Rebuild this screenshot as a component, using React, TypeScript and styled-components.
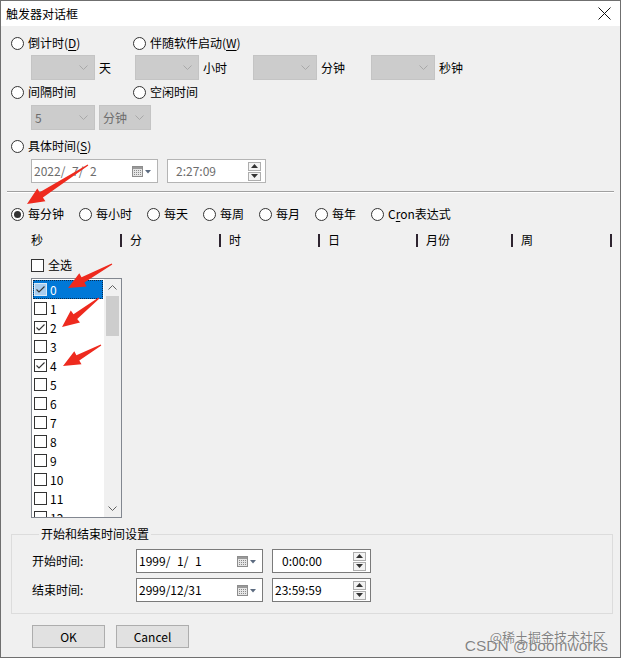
import React from "react";
import styled, { createGlobalStyle } from "styled-components";

const GlobalStyle = createGlobalStyle`
  body {
    margin: 0;
    background: #ffffff;
    font-family: "Noto Sans CJK SC", "Liberation Sans", sans-serif;
    font-size: 12px;
    line-height: 16px;
    color: #000;
  }
`;

const Window = styled.div`
  position: relative;
  width: 621px;
  height: 658px;
  box-sizing: border-box;
  border: 1px solid #6f6f6f;
  background: #f0f0f0;
  display: flex;
  flex-direction: column;
  overflow: hidden;
`;

const TitleBar = styled.div`
  height: 25px;
  background: #ffffff;
  display: flex;
  align-items: center;
  justify-content: space-between;
  padding: 0 9px 0 5px;
  flex-shrink: 0;
`;

const Body = styled.div`
  padding: 7px 10px 0 10px;
  display: flex;
  flex-direction: column;
`;

const Row = styled.div<{ $h: number; $mt?: number; $pl?: number; $gap?: number }>`
  display: flex;
  align-items: center;
  height: ${(p) => p.$h}px;
  margin-top: ${(p) => p.$mt ?? 0}px;
  padding-left: ${(p) => p.$pl ?? 0}px;
  gap: ${(p) => p.$gap ?? 0}px;
  flex-shrink: 0;
`;

const Cell = styled.div<{ $w?: number; $ml?: number }>`
  display: flex;
  align-items: center;
  width: ${(p) => (p.$w ? `${p.$w}px` : "auto")};
  margin-left: ${(p) => p.$ml ?? 0}px;
  flex-shrink: 0;
`;

const RadioWrap = styled.label<{ $w?: number; $mr?: number }>`
  display: flex;
  align-items: center;
  gap: 4px;
  width: ${(p) => (p.$w ? `${p.$w}px` : "auto")};
  margin-right: ${(p) => p.$mr ?? 0}px;
  flex-shrink: 0;
  white-space: nowrap;
`;

const RadioCircle = styled.span<{ $checked?: boolean }>`
  width: 13px;
  height: 13px;
  box-sizing: border-box;
  border: 1px solid #333;
  border-radius: 50%;
  background: #fff;
  display: flex;
  align-items: center;
  justify-content: center;
  &::after {
    content: "";
    width: 7px;
    height: 7px;
    border-radius: 50%;
    background: ${(p) => (p.$checked ? "#333" : "transparent")};
  }
`;

const U = styled.span`
  text-decoration: underline;
  text-underline-offset: 2px;
`;

const Combo = styled.div<{ $w: number }>`
  width: ${(p) => p.$w}px;
  height: 25px;
  box-sizing: border-box;
  background: #cccccc;
  border: 1px solid #c4c4c4;
  display: flex;
  align-items: center;
  justify-content: space-between;
  padding: 0 6px 0 3px;
  color: #6d6d6d;
`;

const SideLabel = styled.span`
  margin-left: 4px;
  white-space: nowrap;
`;

const Field = styled.div<{ $w: number; $disabled?: boolean; $pl?: number }>`
  width: ${(p) => p.$w}px;
  height: 24px;
  box-sizing: border-box;
  background: #fff;
  border: 1px solid ${(p) => (p.$disabled ? "#b4b4b4" : "#7a7a7a")};
  color: ${(p) => (p.$disabled ? "#6d6d6d" : "#000")};
  display: flex;
  align-items: center;
  padding-left: ${(p) => p.$pl ?? 2}px;
  white-space: pre;
  flex-shrink: 0;
`;

const FieldTail = styled.div<{ $mr?: number }>`
  margin-left: auto;
  margin-right: ${(p) => p.$mr ?? 0}px;
  display: flex;
  align-items: center;
`;

const SpinStack = styled.div`
  display: flex;
  flex-direction: column;
  gap: 1px;
  margin-right: 4px;
`;

const SpinBtn = styled.div`
  width: 13px;
  height: 9px;
  box-sizing: border-box;
  border: 1px solid #adadad;
  background: #f3f3f3;
  display: flex;
  align-items: center;
  justify-content: center;
`;

const Separator = styled.div`
  margin: 8px -4px 0 -4px;
  border-top: 1px solid #a0a0a0;
  border-bottom: 1px solid #ffffff;
  flex-shrink: 0;
`;

const HeaderCell = styled.div<{ $w: number }>`
  display: flex;
  align-items: center;
  flex-shrink: 0;
  & > span:first-child {
    width: ${(p) => p.$w}px;
  }
`;

const Pipe = styled.span`
  width: 2px;
  height: 13px;
  background: #2e2430;
  margin-right: 8px;
`;

const CheckWrap = styled.div`
  display: flex;
  align-items: center;
  gap: 4px;
`;

const Box = styled.span<{ $tone?: "normal" | "selected" }>`
  width: 13px;
  height: 13px;
  box-sizing: border-box;
  border: 1px solid ${(p) => (p.$tone === "selected" ? "#d8e8f6" : "#333")};
  background: ${(p) => (p.$tone === "selected" ? "#a9cdee" : "#fff")};
  display: flex;
  align-items: center;
  justify-content: center;
  flex-shrink: 0;
`;

const ListBox = styled.div`
  margin-top: 3px;
  margin-left: 20px;
  width: 91px;
  height: 240px;
  box-sizing: border-box;
  border: 1px solid #828790;
  background: #fff;
  display: flex;
  flex-shrink: 0;
`;

const ListItems = styled.div`
  flex: 1;
  padding: 1px;
  overflow: hidden;
`;

const ListItem = styled.div<{ $selected?: boolean }>`
  height: 19px;
  display: flex;
  align-items: center;
  gap: 3px;
  padding-left: 1px;
  background: ${(p) => (p.$selected ? "#0078d7" : "transparent")};
  color: ${(p) => (p.$selected ? "#fff" : "#000")};
  outline: ${(p) => (p.$selected ? "1px dotted #0b2a4a" : "none")};
  outline-offset: -1px;
`;

const ScrollBar = styled.div`
  width: 17px;
  background: #f0f0f0;
  display: flex;
  flex-direction: column;
  align-items: center;
`;

const ScrollArrow = styled.div`
  height: 17px;
  width: 17px;
  display: flex;
  align-items: center;
  justify-content: center;
`;

const ScrollThumb = styled.div`
  width: 13px;
  height: 40px;
  background: #cdcdcd;
`;

const ScrollTrack = styled.div`
  flex: 1;
  display: flex;
  flex-direction: column;
  align-items: center;
`;

const Group = styled.fieldset`
  margin: 8px -3px 0 0;
  padding: 0 0 11px 20px;
  border: 1px solid #dcdcdc;
  min-width: 0;
  flex-shrink: 0;
  & > legend {
    margin-left: 7px;
    padding: 0 2px;
    line-height: 16px;
  }
`;

const FormLabel = styled.span`
  width: 104px;
  flex-shrink: 0;
`;

const Button = styled.button`
  width: 73px;
  height: 23px;
  box-sizing: border-box;
  border: 1px solid #adadad;
  background: #e1e1e1;
  font-family: "Noto Sans CJK SC", "Liberation Sans", sans-serif;
  font-size: 12px;
  color: #000;
  padding: 0;
`;

const Watermark = styled.div`
  position: absolute;
  right: 12px;
  bottom: 4px;
  display: flex;
  flex-direction: column;
  align-items: flex-end;
  color: rgba(90, 90, 90, 0.75);
  text-shadow: 0 0 1px #fff;
  pointer-events: none;
  & > span:first-child {
    font-size: 13px;
    line-height: 13px;
    margin-right: 2px;
  }
  & > span:last-child {
    font-family: "Liberation Sans", sans-serif;
    font-size: 15.5px;
    line-height: 14px;
    margin-top: -4px;
  }
`;

const Overlay = styled.svg`
  position: absolute;
  left: -1px;
  top: -1px;
  pointer-events: none;
`;

const Chevron = ({ down = true, color = "#a8a8a8" }: { down?: boolean; color?: string }) => (
  <svg width="9" height="5" viewBox="0 0 9 5">
    <polyline
      points={down ? "0.5,0.5 4.5,4.5 8.5,0.5" : "0.5,4.5 4.5,0.5 8.5,4.5"}
      fill="none"
      stroke={color}
      strokeWidth="1"
    />
  </svg>
);

const CalendarIcon = () => (
  <svg width="20" height="11" viewBox="0 0 20 11">
    <rect x="0.5" y="0.5" width="10" height="10" fill="#e6e6e6" stroke="#8d8d8d" />
    <rect x="1" y="1" width="9" height="2" fill="#9a9a9a" />
    {[4, 6, 8].map((y) =>
      [2, 4, 6, 8].map((x) => <rect key={`${x}-${y}`} x={x} y={y} width="1" height="1" fill="#8a8a8a" />)
    )}
    <polygon points="13,4 19,4 16,7.5" fill="#5c6b80" />
  </svg>
);

const Tri = ({ up }: { up?: boolean }) => (
  <svg width="7" height="4" viewBox="0 0 7 4">
    <polygon points={up ? "0,4 7,4 3.5,0" : "0,0 7,0 3.5,4"} fill="#333" />
  </svg>
);

const Tick = () => (
  <svg width="11" height="11" viewBox="0 0 11 11">
    <polyline points="1.5,5.5 4,8 9.5,2.5" fill="none" stroke="#333" strokeWidth="1.1" />
  </svg>
);

const Radio = ({
  label,
  checked,
  w,
  mr,
}: {
  label: React.ReactNode;
  checked?: boolean;
  w?: number;
  mr?: number;
}) => (
  <RadioWrap $w={w} $mr={mr}>
    <RadioCircle $checked={checked} />
    <span>{label}</span>
  </RadioWrap>
);

const DateField = ({ text, disabled }: { text: string; disabled?: boolean }) => (
  <Field $w={127} $disabled={disabled}>
    {text}
    <FieldTail $mr={5}>
      <CalendarIcon />
    </FieldTail>
  </Field>
);

const TimeField = ({ text, disabled, pl }: { text: string; disabled?: boolean; pl: number }) => (
  <Field $w={99} $disabled={disabled} $pl={pl}>
    {text}
    <FieldTail>
      <SpinStack>
        <SpinBtn>
          <Tri up />
        </SpinBtn>
        <SpinBtn>
          <Tri />
        </SpinBtn>
      </SpinStack>
    </FieldTail>
  </Field>
);

// tapered annotation arrow, tail -> tip
const arrow = (tx: number, ty: number, px: number, py: number) => {
  const dx = px - tx;
  const dy = py - ty;
  const len = Math.hypot(dx, dy);
  const ux = dx / len;
  const uy = dy / len;
  const nx = -uy;
  const ny = ux;
  const hl = 17;
  const bx = px - ux * hl;
  const by = py - uy * hl;
  const pts = [
    [tx + nx * 0.6, ty + ny * 0.6],
    [bx + nx * 3, by + ny * 3],
    [bx + nx * 7.5, by + ny * 7.5],
    [px, py],
    [bx - nx * 7.5, by - ny * 7.5],
    [bx - nx * 3, by - ny * 3],
    [tx - nx * 0.6, ty - ny * 0.6],
  ];
  return pts.map((p) => p.map((v) => v.toFixed(1)).join(",")).join(" ");
};

const headers = [
  { t: "秒", w: 89 },
  { t: "分", w: 89 },
  { t: "时", w: 89 },
  { t: "日", w: 88 },
  { t: "月份", w: 85 },
  { t: "周", w: 89 },
];

const items = Array.from({ length: 13 }, (_, i) => i);
const checked = new Set([0, 2, 4]);

export default function App() {
  return (
    <>
      <GlobalStyle />
      <Window>
        <TitleBar>
          <span>触发器对话框</span>
          <svg width="13" height="13" viewBox="0 0 13 13">
            <line x1="0.5" y1="0.5" x2="12.5" y2="12.5" stroke="#111" strokeWidth="1" />
            <line x1="12.5" y1="0.5" x2="0.5" y2="12.5" stroke="#111" strokeWidth="1" />
          </svg>
        </TitleBar>
        <Body>
          <Row $h={20}>
            <Radio w={122} label={<>倒计时(<U>D</U>)</>} />
            <Radio label={<>伴随软件启动(<U>W</U>)</>} />
          </Row>
          <Row $h={25} $mt={2} $pl={20}>
            <Cell $w={104}>
              <Combo $w={64}>
                <span />
                <Chevron />
              </Combo>
              <SideLabel>天</SideLabel>
            </Cell>
            <Cell $w={118}>
              <Combo $w={64}>
                <span />
                <Chevron />
              </Combo>
              <SideLabel>小时</SideLabel>
            </Cell>
            <Cell $w={118}>
              <Combo $w={64}>
                <span />
                <Chevron />
              </Combo>
              <SideLabel>分钟</SideLabel>
            </Cell>
            <Cell>
              <Combo $w={64}>
                <span />
                <Chevron />
              </Combo>
              <SideLabel>秒钟</SideLabel>
            </Cell>
          </Row>
          <Row $h={20} $mt={2}>
            <Radio w={122} label="间隔时间" />
            <Radio label="空闲时间" />
          </Row>
          <Row $h={25} $mt={3} $pl={20} $gap={4}>
            <Combo $w={64}>
              <span>5</span>
              <Chevron />
            </Combo>
            <Combo $w={52}>
              <span>分钟</span>
              <Chevron />
            </Combo>
          </Row>
          <Row $h={20} $mt={6}>
            <Radio label={<>具体时间(<U>S</U>)</>} />
          </Row>
          <Row $h={24} $mt={3} $pl={20} $gap={9}>
            <DateField text={"2022/\u20077/\u20072"} disabled />
            <TimeField text="2:27:09" disabled pl={8} />
          </Row>
          <Separator />
          <Row $h={20} $mt={11}>
            <Radio checked mr={15} label="每分钟" />
            <Radio mr={15} label="每小时" />
            <Radio mr={15} label="每天" />
            <Radio mr={15} label="每周" />
            <Radio mr={15} label="每月" />
            <Radio mr={15} label="每年" />
            <Radio label={<>C<U>r</U>on表达式</>} />
          </Row>
          <Row $h={20} $mt={6} $pl={20}>
            {headers.map((h) => (
              <HeaderCell key={h.t} $w={h.w}>
                <span>{h.t}</span>
                <Pipe />
              </HeaderCell>
            ))}
          </Row>
          <Row $h={20} $mt={5} $pl={20}>
            <CheckWrap>
              <Box />
              <span>全选</span>
            </CheckWrap>
          </Row>
          <ListBox>
            <ListItems>
              {items.map((i) => (
                <ListItem key={i} $selected={i === 0}>
                  <Box $tone={i === 0 ? "selected" : "normal"}>{checked.has(i) && <Tick />}</Box>
                  <span>{i}</span>
                </ListItem>
              ))}
            </ListItems>
            <ScrollBar>
              <ScrollArrow>
                <Chevron down={false} color="#606060" />
              </ScrollArrow>
              <ScrollTrack>
                <ScrollThumb />
              </ScrollTrack>
              <ScrollArrow>
                <Chevron color="#606060" />
              </ScrollArrow>
            </ScrollBar>
          </ListBox>
          <Group>
            <legend>开始和结束时间设置</legend>
            <Row $h={24} $mt={7}>
              <FormLabel>开始时间:</FormLabel>
              <DateField text={"1999/\u20071/\u20071"} />
              <Cell $ml={9}>
                <TimeField text="0:00:00" pl={9} />
              </Cell>
            </Row>
            <Row $h={24} $mt={5}>
              <FormLabel>结束时间:</FormLabel>
              <DateField text="2999/12/31" />
              <Cell $ml={9}>
                <TimeField text="23:59:59" pl={2} />
              </Cell>
            </Row>
          </Group>
          <Row $h={23} $mt={11} $pl={21} $gap={11}>
            <Button>OK</Button>
            <Button>Cancel</Button>
          </Row>
        </Body>
        <Watermark>
          <span>@稀土掘金技术社区</span>
          <span>CSDN @boomworks</span>
        </Watermark>
        <Overlay width="624" height="660" viewBox="0 0 624 660">
          <polygon points={arrow(88, 165, 27, 204)} fill="#ee2a1e" />
          <polygon points={arrow(112, 264, 68, 288)} fill="#ee2a1e" />
          <polygon points={arrow(99, 298, 62, 327)} fill="#ee2a1e" />
          <polygon points={arrow(101, 345, 63, 366)} fill="#ee2a1e" />
        </Overlay>
      </Window>
    </>
  );
}
